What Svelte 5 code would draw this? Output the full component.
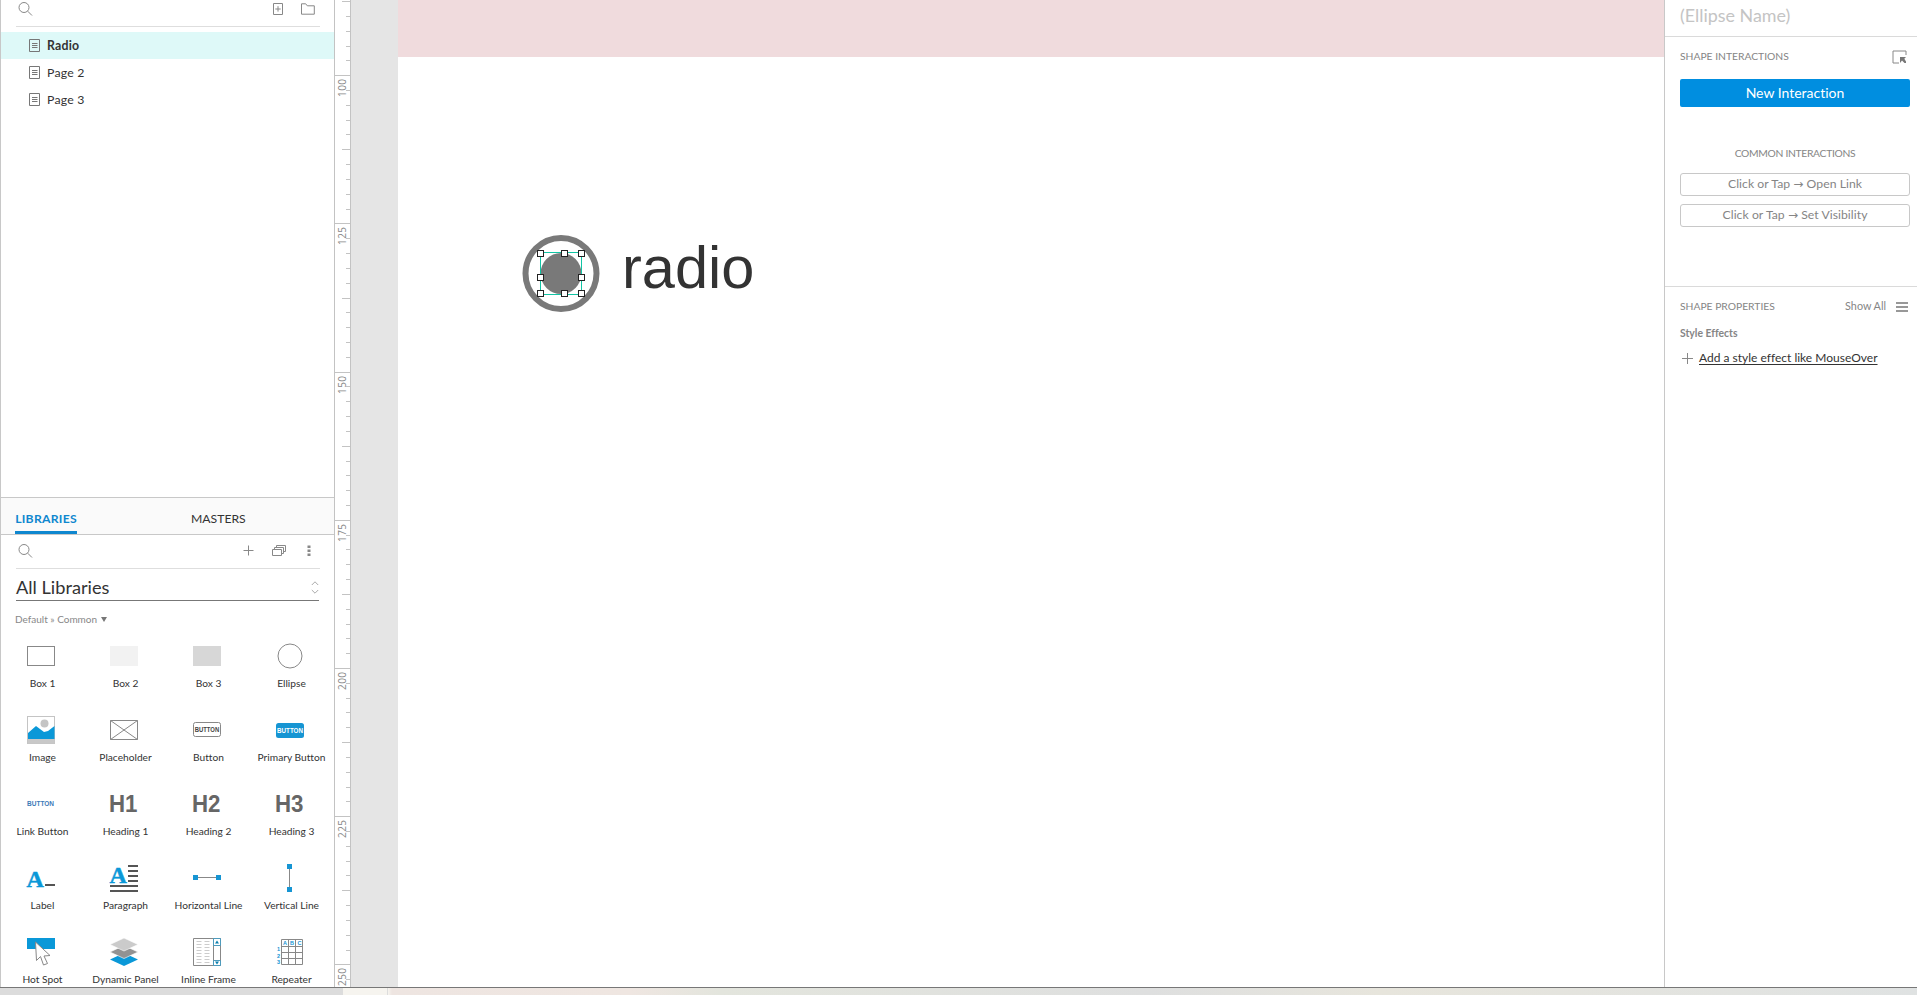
<script lang="ts">
	const pages = ['Radio', 'Page 2', 'Page 3'];
	let activePage = $state('Radio');

	const widgets = [
		{ id: 'box1', label: 'Box 1' },
		{ id: 'box2', label: 'Box 2' },
		{ id: 'box3', label: 'Box 3' },
		{ id: 'ellipse', label: 'Ellipse' },
		{ id: 'image', label: 'Image' },
		{ id: 'placeholder', label: 'Placeholder' },
		{ id: 'button', label: 'Button' },
		{ id: 'primary', label: 'Primary Button' },
		{ id: 'link', label: 'Link Button' },
		{ id: 'h1', label: 'Heading 1' },
		{ id: 'h2', label: 'Heading 2' },
		{ id: 'h3', label: 'Heading 3' },
		{ id: 'label', label: 'Label' },
		{ id: 'paragraph', label: 'Paragraph' },
		{ id: 'hline', label: 'Horizontal Line' },
		{ id: 'vline', label: 'Vertical Line' },
		{ id: 'hotspot', label: 'Hot Spot' },
		{ id: 'dynamic', label: 'Dynamic Panel' },
		{ id: 'iframe', label: 'Inline Frame' },
		{ id: 'repeater', label: 'Repeater' }
	];

	// ruler: one tick every 2.5 units, a numbered one every 25
	const tickGap = 14.82;
	const ticks = Array.from({ length: 67 }, (_, i) => {
		const n = i - 5;
		return {
			y: Math.round(75.2 + n * tickGap) + 0.5,
			x: n % 10 === 0 ? 0 : n % 5 === 0 ? 8 : 12,
			label: n % 10 === 0 ? 100 + (n / 10) * 25 : null
		};
	});

	const handles = [
		[540.5, 253.5],
		[564.5, 253.5],
		[581.5, 253.5],
		[540.5, 277.5],
		[581.5, 277.5],
		[540.5, 293.5],
		[564.5, 293.5],
		[581.5, 293.5]
	];
</script>

{#snippet searchIcon()}
	<svg class="search" viewBox="0 0 16 16" width="16" height="16">
		<circle cx="6" cy="6.5" r="5" />
		<path d="M9.700 10.200 14 14.500" />
	</svg>
{/snippet}

<div class="app">
	<div class="workspace">
		<aside class="left">
			<section class="pages">
				<div class="toolbar">
					{@render searchIcon()}
					<svg class="add-page" viewBox="0 0 10 12" width="10" height="12">
						<path d="M.5.5h9v11h-9zM5 3.2v5.4M2.3 6h5.4" />
					</svg>
					<svg class="add-folder" viewBox="0 0 14 12" width="14" height="12">
						<path d="M.5.8h4.2l1.6 2h7v8.4H.5z" />
					</svg>
				</div>
				{#each pages as page (page)}
					<button type="button" class="page" class:active={page === activePage} onclick={() => (activePage = page)}>
						<svg viewBox="0 0 12 14" width="12" height="14">
							<path d="M.5.5h10v12H.5zM3 4.5h5.5M3 6.5h5.5M3 8.5h5.5" />
						</svg>
						<span>{page}</span>
					</button>
				{/each}
			</section>

			<section class="libraries">
				<div class="tabs">
					<button type="button" class="tab tab--active">LIBRARIES</button>
					<button type="button" class="tab">MASTERS</button>
				</div>
				<div class="toolbar toolbar--libraries">
					{@render searchIcon()}
					<svg class="plus" viewBox="0 0 11 11" width="11" height="11"><path d="M5.5.5v10M.5 5.5h10" /></svg>
					<svg class="windows" viewBox="0 0 15 12" width="15" height="12">
						<path d="M.5 4.5h9v6h-9zM2.5 4.5v-2h9v6h-2M4.5 2.5v-2h9v6h-2" />
					</svg>
					<svg class="dots" viewBox="0 0 4 12" width="4" height="12">
						<path d="M.5.5h3v2.5h-3zM.5 4.5h3v2.5h-3zM.5 8.5h3v2.5h-3z" />
					</svg>
				</div>
				<div class="select">
					<span>All Libraries</span>
					<svg viewBox="0 0 8 13" width="8" height="13"><path d="M.8 4 4 .8 7.2 4M.8 9 4 12.2 7.2 9" /></svg>
				</div>
				<div class="crumb"><span>Default » Common</span><i></i></div>
				<div class="grid">
					{#each widgets as w (w.id)}
						<div class="widget">
							<svg viewBox="0 0 32 32" width="32" height="32">
								{#if w.id === 'box1'}
									<rect x="2.5" y="6.5" width="27" height="19" class="line" />
								{:else if w.id === 'box2'}
									<rect x="2" y="6" width="28" height="20" fill="#f2f2f2" />
								{:else if w.id === 'box3'}
									<rect x="2" y="6" width="28" height="20" fill="#d7d7d7" />
								{:else if w.id === 'ellipse'}
									<circle cx="16" cy="16" r="12" class="line" />
								{:else if w.id === 'image'}
									<rect x="2.5" y="2.5" width="27" height="27" fill="#fff" stroke="#c4c4c4" />
									<circle cx="19.5" cy="9.5" r="4" fill="#c4c4c4" />
									<path d="M3 19 11 12l8 6 4-1 6.500-5v13H3z" fill="#0a98d8" />
									<path d="M3 25h26.500v4.500H3z" fill="#c8c8c8" />
								{:else if w.id === 'placeholder'}
									<path d="M2.500 6.500h27v19h-27zM2.500 6.500l27 19M29.500 6.500l-27 19" class="line" />
								{:else if w.id === 'button'}
									<rect x="2.500" y="8.500" width="27" height="14" rx="2" class="line" />
									<text x="3.700" y="18" textLength="24.500" lengthAdjust="spacingAndGlyphs" class="btn" fill="#444">BUTTON</text>
								{:else if w.id === 'primary'}
									<rect x="2" y="9" width="28" height="15" rx="2.500" fill="#1695d3" />
									<text x="3" y="19" textLength="26" lengthAdjust="spacingAndGlyphs" class="btn" fill="#fff">BUTTON</text>
								{:else if w.id === 'link'}
									<text x="2" y="18" textLength="27" class="btn" fill="#3d7ab8">BUTTON</text>
								{:else if w.id === 'h1' || w.id === 'h2' || w.id === 'h3'}
									<text x="1" y="24" textLength="28.500" lengthAdjust="spacingAndGlyphs" class="heading">{w.id.toUpperCase()}</text>
								{:else if w.id === 'label'}
									<text x="1.500" y="24.500" textLength="17" class="serif" font-size="24">A</text>
									<path d="M20 23h10" class="bar" />
								{:else if w.id === 'paragraph'}
									<text x="1.500" y="20.500" textLength="17" class="serif" font-size="24">A</text>
									<path d="M20 4h10M20 9h10M20 14h10M20 19h10M2 24h28M2 29h28" class="bar" />
								{:else if w.id === 'hline'}
									<path d="M4 15.500h24" class="line" />
									<path d="M2 13h5v5H2zM25 13h5v5h-5z" fill="#1695d3" />
								{:else if w.id === 'vline'}
									<path d="M15.500 5v24" class="line" />
									<path d="M13 2h5v5h-5zM13 25h5v5h-5z" fill="#1695d3" />
								{:else if w.id === 'hotspot'}
									<path d="M2 2h28v11H2z" fill="#0a98d8" />
									<path d="m10.500 6 1 18.500 4-4 3 8.500 4-1.500-3.500-7.500 6-.5z" fill="#fff" stroke="#888" />
								{:else if w.id === 'dynamic'}
									<path d="m16 17 14 6.500L16 30 2 23.500z" fill="#0a98d8" />
									<path d="m16 9.500 14 6.500-14 6.500L2 16z" fill="#929292" stroke="#fff" stroke-width=".6" />
									<path d="m16 2 14 6.500L16 15 2 8.500z" fill="#cbcbcb" stroke="#fff" stroke-width=".6" />
								{:else if w.id === 'iframe'}
									<path d="M2.500 2.500h27v27h-27zM22.500 2.500v27" class="line" />
									<path d="M22.500 2.500h7v7h-7zM22.500 24.500h7v5h-7z" fill="none" stroke="#4d9bbd" />
									<path d="m24 7.500 2-3 2 3zM24 25.500l2 3 2-3z" fill="#087faf" />
									<path
										d="M5.500 5.500h5M13.500 5.500h5M5.500 8.500h5M13.500 8.500h5M5.500 11.500h5M13.500 11.500h5M5.500 14.500h5M13.500 14.500h5M5.500 17.500h5M13.500 17.500h5M5.500 20.500h5M13.500 20.500h5M5.500 23.500h5M13.500 23.500h5M5.500 26.500h5M13.500 26.500h5"
										stroke="#ccc"
									/>
								{:else}
									<path
										d="M7.500 3.500h21v25h-21zM14.500 3.500v25M21.500 3.500v25M7.500 10.500h21M7.500 16.500h21M7.500 22.500h21"
										class="line"
									/>
									<text x="9" y="9" class="cell">A</text>
									<text x="16" y="9" class="cell">B</text>
									<text x="23.500" y="9" class="cell">C</text>
									<text x="3" y="15" class="cell">1</text>
									<text x="3" y="21.500" class="cell">2</text>
									<text x="3" y="28" class="cell">3</text>
								{/if}
							</svg>
							<span>{w.label}</span>
						</div>
					{/each}
				</div>
			</section>
		</aside>

		<svg class="ruler" viewBox="0 0 17 987" width="17" height="987">
			<path d="M.5 0v987M16.500 0v987" stroke="#c3c3c3" />
			{#each ticks as t (t.y)}
				<path d="M{t.x} {t.y}H16" stroke="#c3c3c3" />
				{#if t.label !== null}
					<text transform="translate(12 {t.y + 21.5}) rotate(-90)" textLength="18">{t.label}</text>
				{/if}
			{/each}
		</svg>

		<main class="canvas">
			<div class="band"></div>
			<svg class="shape" viewBox="510 220 110 110" width="110" height="110">
				<circle cx="561" cy="273.500" r="35.500" fill="none" stroke="#797979" stroke-width="6" />
				<circle cx="561" cy="273.500" r="20.500" fill="#797979" />
				<rect x="540.500" y="252.500" width="41" height="42" fill="none" stroke="#12c4a4" />
				{#each handles as [x, y]}
					<rect x={x - 3} y={y - 3} width="6" height="6" fill="#fff" stroke="#222" />
				{/each}
			</svg>
			<span class="radio-text">radio</span>
		</main>

		<aside class="right">
			<div class="name">(Ellipse Name)</div>
			<section class="interactions">
				<div class="section-head">
					<span>SHAPE INTERACTIONS</span>
					<svg viewBox="0 0 15 14" width="15" height="14">
						<path d="M14 5V1H1v12h6" fill="none" stroke="#888" />
						<path d="M8 7h6L12.300 8.700 14 11.500v1.500h-1.500L10 10.500 8 13z" fill="#777" />
					</svg>
				</div>
				<button type="button" class="new">New Interaction</button>
				<div class="common">COMMON INTERACTIONS</div>
				<button type="button" class="quick">Click or Tap <b>→</b> Open Link</button>
				<button type="button" class="quick">Click or Tap <b>→</b> Set Visibility</button>
			</section>
			<section class="properties">
				<div class="section-head">
					<span>SHAPE PROPERTIES</span>
					<span class="show">Show All</span>
					<svg viewBox="0 0 12 10" width="12" height="10">
						<path d="M0 1h12M0 5h12M0 9h12" stroke="#777" stroke-width="1.500" />
					</svg>
				</div>
				<div class="sub">Style Effects</div>
				<div class="add">
					<svg viewBox="0 0 11 11" width="11" height="11"><path d="M5.500 0v11M0 5.500h11" stroke="#888" /></svg>
					<a href="#style">Add a style effect like MouseOver</a>
				</div>
			</section>
		</aside>
	</div>
	<footer></footer>
</div>

<style>
	:global(body) {
		margin: 0;
		overflow: hidden;
	}

	.app {
		width: 1917px;
		height: 995px;
		overflow: hidden;
		background: #fff;
		font-family: Lato, 'Open Sans', sans-serif;
		font-size: 12px;
		font-variant-ligatures: none;
		color: #333;
	}

	.app *,
	.app {
		box-sizing: border-box;
	}

	button {
		padding: 0;
		border: 0;
		background: none;
		font: inherit;
		font-variant-ligatures: none;
		color: inherit;
	}

	.workspace {
		display: flex;
		height: 987px;
		overflow: hidden;
	}

	.left {
		display: flex;
		flex-direction: column;
		width: 334px;
		flex: none;
		border-left: 1px solid #c8c8c8;
	}

	.pages {
		height: 497px;
		flex: none;
	}

	.toolbar {
		display: flex;
		align-items: center;
		height: 27px;
		margin: 0 14px 5px 15px;
		padding: 0 5px 9px 2px;
		border-bottom: 1px solid #dedede;
	}

	.toolbar svg,
	.select svg {
		fill: none;
		stroke: #888;
		flex: none;
	}

	.toolbar .search {
		margin-right: auto;
	}

	.add-folder {
		margin-left: 18px;
	}

	.page {
		display: flex;
		align-items: center;
		width: 100%;
		height: 27px;
		padding-left: 28px;
		font-size: 12.3px;
		letter-spacing: 0.2px;
		text-align: left;
	}

	.page span {
		padding-bottom: 1px;
	}

	.page svg {
		margin-right: 6px;
		fill: none;
		stroke: #777;
	}

	.page.active {
		background: #def9f8;
		font-weight: 700;
	}

	.libraries {
		border-top: 1px solid #c8c8c8;
	}

	.tabs {
		display: flex;
		height: 37px;
		padding-left: 14px;
		border-bottom: 1px solid #c8c8c8;
		background: #fafafa;
	}

	.tab {
		height: 36px;
		padding-top: 8px;
		border-bottom: 3px solid transparent;
		font-size: 12.2px;
	}

	.tab--active {
		width: 62px;
		margin-right: 114px;
		border-color: #0f87cf;
		color: #0f87cf;
		font-weight: 700;
		letter-spacing: 0.25px;
	}

	.toolbar--libraries {
		height: 34px;
		margin-bottom: 0;
		padding: 0 9px 2px 2px;
	}

	.toolbar .windows {
		margin: 0 20px 0 18px;
	}

	.toolbar .dots {
		fill: #888;
		stroke: none;
	}

	.select {
		display: flex;
		align-items: center;
		justify-content: space-between;
		height: 32px;
		margin: 0 15px;
		padding-top: 5px;
		border-bottom: 1px solid #777;
		font-size: 18.2px;
	}

	.select span {
		line-height: 22px;
	}

	.select svg {
		stroke: #aaa;
	}

	.crumb {
		display: flex;
		align-items: center;
		height: 36px;
		padding-left: 14px;
		font-size: 10px;
		color: #888;
	}

	.crumb i {
		margin-left: 4px;
		border: 3px solid transparent;
		border-top: 5px solid #777;
		border-bottom: 0;
	}

	.grid {
		display: grid;
		grid-template-columns: repeat(4, 83px);
		grid-auto-rows: 74px;
		padding-top: 3px;
	}

	.widget {
		display: flex;
		flex-direction: column;
		align-items: center;
		font-size: 10.2px;
		white-space: nowrap;
	}

	.widget svg {
		display: block;
		flex: none;
		margin-right: 3px;
	}

	.widget span {
		margin-top: 5px;
		line-height: 13px;
	}

	.line {
		fill: none;
		stroke: #888;
	}

	.bar {
		stroke: #555;
		stroke-width: 2;
	}

	.btn {
		font: 700 6.5px 'Liberation Sans', sans-serif;
	}

	.heading {
		font: 700 23px 'Liberation Sans', sans-serif;
		fill: #666;
	}

	.serif {
		font-family: 'Liberation Serif', serif;
		font-weight: 700;
		fill: #0a98d8;
		stroke: #0a98d8;
		stroke-width: 0.5;
	}

	.cell {
		font: 700 5.5px 'Liberation Sans', sans-serif;
		fill: #1695d3;
	}

	.ruler {
		flex: none;
		background: #fff;
	}

	.ruler text {
		font: 10px 'Open Sans', sans-serif;
		fill: #888;
	}

	.canvas {
		position: relative;
		flex: 1;
		border-left: 47px solid #e5e5e5;
	}

	.band {
		height: 57px;
		background: #f0dbdd;
	}

	/* free canvas items, offset from the canvas origin at x = 398 */
	.shape {
		position: absolute;
		left: 112px;
		top: 220px;
	}

	.radio-text {
		position: absolute;
		left: 224px;
		top: 235px;
		font: 59.5px/66px 'Liberation Sans', Arial, sans-serif;
	}

	.right {
		width: 253px;
		flex: none;
		border-left: 1px solid #c8c8c8;
	}

	.name {
		height: 37px;
		padding: 4px 0 0 15px;
		border-bottom: 1px solid #dadada;
		font-size: 17.9px;
		line-height: 22px;
		color: #c4c4c4;
	}

	.interactions {
		display: flex;
		flex-direction: column;
		height: 249px;
		padding: 12px 7px 0 15px;
		color: #858585;
	}

	.section-head {
		display: flex;
		align-items: center;
		justify-content: space-between;
		height: 15px;
		padding-right: 3px;
		font-size: 10.3px;
		line-height: 14px;
		color: #858585;
	}

	.section-head span {
		padding-bottom: 2px;
	}

	.new {
		height: 28px;
		margin-top: 15px;
		padding-bottom: 1px;
		border-radius: 2px;
		background: #008ee0;
		font-size: 14px;
		color: #fff;
	}

	.common {
		margin: 39px 0 12px;
		font-size: 10.3px;
		letter-spacing: -0.3px;
		line-height: 15px;
		text-align: center;
	}

	.quick {
		height: 23px;
		margin-bottom: 8px;
		padding-bottom: 2px;
		border: 1px solid #c8c8c8;
		border-radius: 3px;
		font-size: 12.2px;
		letter-spacing: 0.05px;
	}

	.quick b {
		font: 12px 'DejaVu Sans', sans-serif;
	}

	.properties {
		padding: 12px 5px 0 15px;
		border-top: 1px solid #dadada;
	}

	.properties .section-head {
		padding-right: 4px;
	}

	.section-head .show {
		margin: 0 10px 0 auto;
		font-size: 10.8px;
	}

	.sub {
		margin-top: 12px;
		font-size: 10.4px;
		font-weight: 700;
		line-height: 14px;
		color: #858585;
	}

	.add {
		display: flex;
		align-items: center;
		margin: 10px 0 0 2px;
		line-height: 16px;
	}

	.add a {
		margin-left: 6px;
		color: #333;
		text-underline-offset: 2px;
	}

	footer {
		height: 8px;
		border-top: 1px solid #777;
		background: linear-gradient(
			90deg,
			#dcdcdc 343px,
			#f6f4ef 343px,
			#f6f4ef 387px,
			#ddd 387px,
			#ddd 388px,
			#f6f4ef 388px,
			#eee5e1 392px,
			#efe6e1 630px,
			#e3e5dd 720px,
			#dedfdf 1150px,
			#e7e5dc 1380px,
			#dfe2e2 1917px
		);
	}
</style>
